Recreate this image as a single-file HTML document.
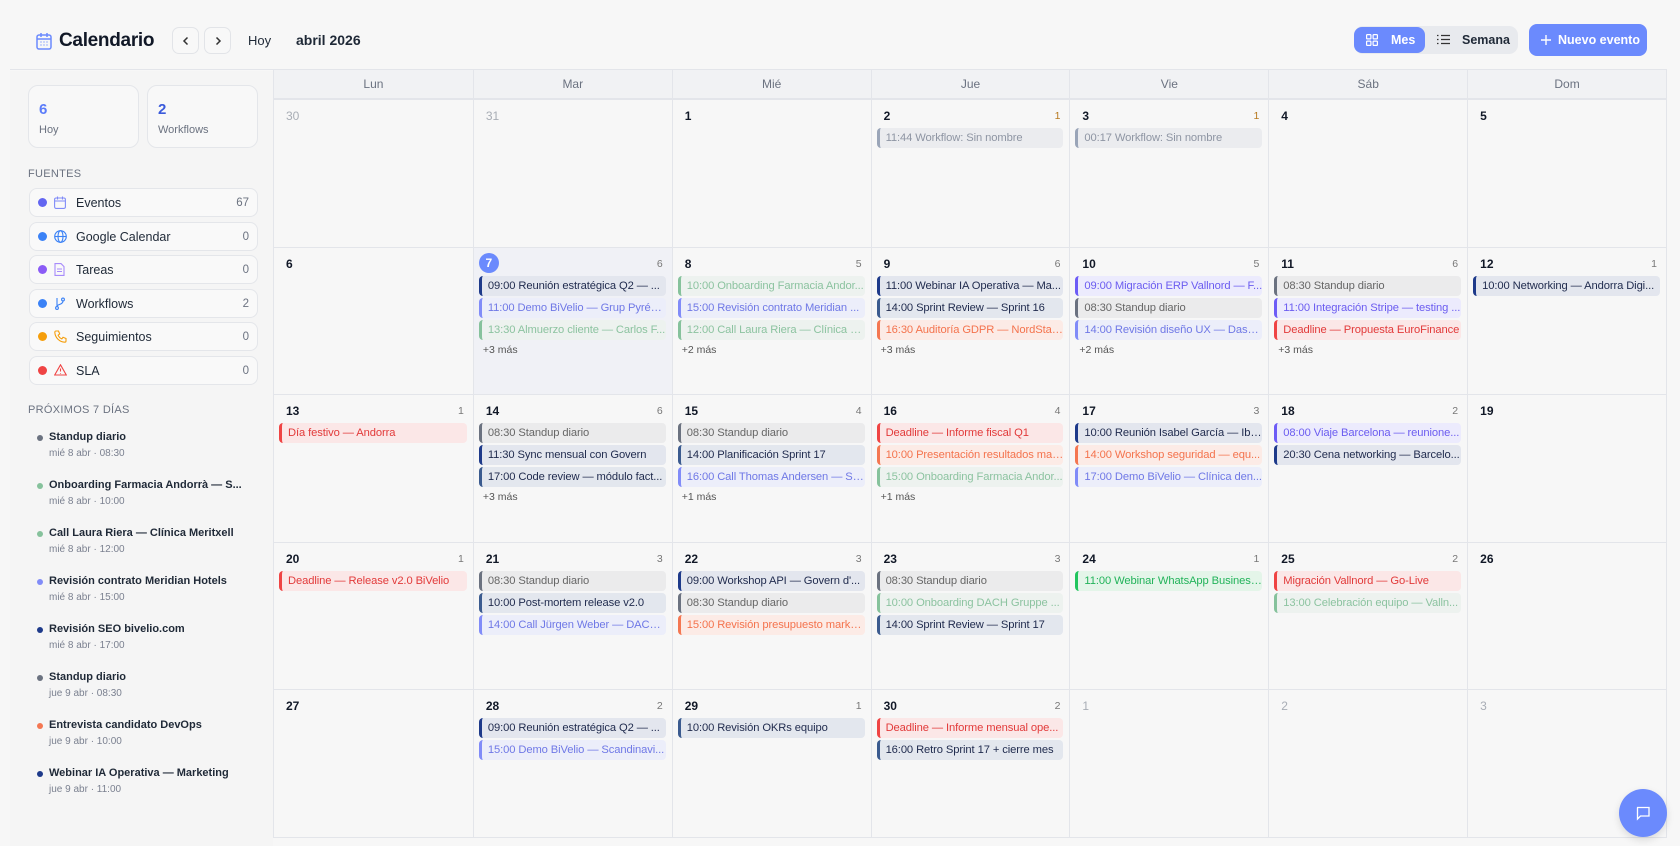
<!DOCTYPE html>
<html><head><meta charset="utf-8"><style>
*{box-sizing:border-box;margin:0;padding:0}
body{width:1680px;height:846px;background:#f7f7f7;font-family:"Liberation Sans","DejaVu Sans",sans-serif;position:relative;overflow:hidden;color:#1f2937}
.abs{position:absolute}
.hdr{left:10px;top:0;width:1657px;height:70px;border-bottom:1px solid #e3e5ea}
.title{left:59px;top:30px;font-size:19px;font-weight:bold;color:#111827;letter-spacing:-.3px}
.nb{width:27px;height:27px;border:1px solid #e2e4e8;border-radius:7px;background:#f8f8f8;top:27px;display:flex;align-items:center;justify-content:center}
.tog{left:1354px;top:26px;width:164px;height:28px;background:#e8eaee;border-radius:9px}
.mes{left:1354px;top:27px;width:71px;height:26px;background:#6b8afd;border-radius:8px;color:#fff;font-weight:bold;font-size:12.5px}
.btn{left:1529px;top:24px;width:118px;height:32px;background:#6b8afd;border-radius:8px;color:#fff;font-weight:bold;font-size:12.5px}
.side{left:10px;top:71px;width:263px;height:775px;background:#f5f5f5}
.card{top:85px;width:111px;height:63px;border:1px solid #e4e6ea;border-radius:10px;background:#f8f8f8}
.card b{position:absolute;left:10px;top:15px;font-size:15px;color:#5b7cfa}
.card span{position:absolute;left:10px;top:38px;font-size:11px;color:#6b7280}
.lbl{font-size:11px;color:#6b7280;letter-spacing:.3px}
.src{left:29px;width:229px;height:29px;border:1px solid #e4e6ea;border-radius:8px;background:#f9f9f9;font-size:12.5px;color:#1f2937}
.src .d{position:absolute;left:8px;top:9px;width:9px;height:9px;border-radius:50%}
.src .i{position:absolute;left:24px;top:7px}
.src .t{position:absolute;left:46px;top:7px}
.src .c{position:absolute;right:8px;top:8px;font-size:11.5px;color:#6b7280}
.up{width:220px;height:34px}
.up .d{position:absolute;left:0;top:4px;width:6px;height:6px;border-radius:50%}
.up .t{position:absolute;left:12px;top:0;font-size:11px;font-weight:bold;color:#1f2937;white-space:nowrap}
.up .s{position:absolute;left:12px;top:17px;font-size:10px;color:#7b8190;white-space:nowrap}
.grid{left:273px;top:70px;width:1394px;height:768px;border-left:1px solid #e3e5ea;border-right:1px solid #e3e5ea;border-bottom:1px solid #e3e5ea;display:grid;grid-template-columns:repeat(7,1fr);grid-template-rows:29px repeat(5,1fr)}
.ch{background:#f1f2f4;border-bottom:1px solid #e3e5ea;text-align:center;font-size:12px;color:#6b7280;line-height:29px}
.ch+.ch{border-left:1px solid #e3e5ea}
.cell{border-left:1px solid #e3e5ea;border-top:1px solid #e3e5ea;position:relative;padding:28px 6px 0 5px;overflow:hidden}
.cell.f{border-left:none}
.cell.td{background:#f0f1f6}
.n{position:absolute;left:12px;top:9px;font-size:12px;font-weight:bold;color:#111827}
.n.o{color:#a8adb5;font-weight:normal}
.n.today{left:5px;top:5px;width:20px;height:20px;border-radius:50%;background:#6b8afd;color:#fff;text-align:center;line-height:20px}
.k{position:absolute;right:9px;top:10px;font-size:10.5px;color:#777}
.e{height:20px;margin-bottom:2px;border-radius:4px;border-left:3px solid;font-size:11.2px;line-height:20px;padding-left:6px;white-space:nowrap;overflow:hidden;text-overflow:ellipsis;letter-spacing:-.1px}
.more{font-size:10.5px;color:#555;padding-left:4px;margin-top:4px}
.nv{border-color:#1e3a8a;background:#e3e6ee;color:#1f2a4d}
.lv{border-color:#818cf8;background:#eceefa;color:#6f78e6}
.gr{border-color:#86c29c;background:#edf2ef;color:#8cc3a0}
.gy{border-color:#6b7280;background:#ebebec;color:#666}
.rd{border-color:#ef4444;background:#fbe7e7;color:#e23a3a}
.or{border-color:#f47752;background:#fcebe6;color:#f4734d}
.pu{border-color:#6d5cf6;background:#ecebfd;color:#6b5cf0}
.sb{border-color:#3b5b8f;background:#e3e7ee;color:#1f2a4d}
.gb{border-color:#22c55e;background:#e4f5e9;color:#22b35a}
.wf{border-color:#9aa5b8;background:#ebecef;color:#8e95a3}
.chat{left:1619px;top:789px;width:48px;height:48px;border-radius:50%;background:#6b8afd;box-shadow:0 3px 8px rgba(0,0,0,.12)}
</style></head><body>
<div class="abs hdr"></div>
<svg class="abs" style="left:36px;top:32px" width="16" height="18" viewBox="0 0 16 18" fill="none" stroke="#6b8afd" stroke-width="1.5"><rect x="1" y="3" width="14" height="14" rx="2"/><path d="M1 7h14M5 1v4M11 1v4"/><path d="M4.5 10h1M7.5 10h1M10.5 10h1M4.5 13h1M7.5 13h1M10.5 13h1" stroke-width="1.3"/></svg>
<div class="abs title">Calendario</div>
<div class="abs nb" style="left:172px"><svg width="10" height="10" viewBox="0 0 10 10" fill="none" stroke="#333" stroke-width="1.5"><path d="M6.5 1.5L3 5l3.5 3.5"/></svg></div>
<div class="abs nb" style="left:204px"><svg width="10" height="10" viewBox="0 0 10 10" fill="none" stroke="#333" stroke-width="1.5"><path d="M3.5 1.5L7 5 3.5 8.5"/></svg></div>
<div class="abs" style="left:248px;top:33px;font-size:13px;color:#1f2937">Hoy</div>
<div class="abs" style="left:296px;top:32px;font-size:14px;font-weight:bold;color:#1f2937">abril 2026</div>
<div class="abs tog"></div>
<div class="abs mes"><svg style="position:absolute;left:12px;top:7px" width="12" height="12" viewBox="0 0 12 12" fill="none" stroke="#fff" stroke-width="1.2"><rect x=".6" y=".6" width="4.3" height="4.3" rx=".8"/><rect x="7.1" y=".6" width="4.3" height="4.3" rx=".8"/><rect x=".6" y="7.1" width="4.3" height="4.3" rx=".8"/><rect x="7.1" y="7.1" width="4.3" height="4.3" rx=".8"/></svg><span style="position:absolute;left:37px;top:6px">Mes</span></div>
<svg class="abs" style="left:1437px;top:34px" width="13" height="11" viewBox="0 0 13 11" fill="none" stroke="#333" stroke-width="1.3"><path d="M4 1.5h9M4 5.5h9M4 9.5h9M0 1.5h1.5M0 5.5h1.5M0 9.5h1.5"/></svg>
<div class="abs" style="left:1462px;top:33px;font-size:12.5px;font-weight:bold;color:#1f2937">Semana</div>
<div class="abs btn"><svg style="position:absolute;left:11px;top:10px" width="12" height="12" viewBox="0 0 12 12" stroke="#fff" stroke-width="1.4"><path d="M6 1v10M1 6h10"/></svg><span style="position:absolute;left:29px;top:9px">Nuevo evento</span></div>

<div class="abs side"></div>
<div class="abs card" style="left:28px"><b>6</b><span>Hoy</span></div>
<div class="abs card" style="left:147px"><b style="color:#3b5bdb">2</b><span>Workflows</span></div>
<div class="abs lbl" style="left:28px;top:168px">FUENTES</div>

<div class="abs src" style="top:188px"><div class="d" style="background:#6366f1"></div><svg class="i" width="12" height="13" viewBox="0 0 12 13" fill="none" stroke="#818cf8" stroke-width="1.1"><rect x=".6" y="2" width="10.8" height="10.4" rx="1.5"/><path d="M.6 5h10.8M3.5 .5v3M8.5 .5v3"/></svg><span class="t">Eventos</span><span class="c">67</span></div>
<div class="abs src" style="top:222px"><div class="d" style="background:#3b82f6"></div><svg class="i" width="13" height="13" viewBox="0 0 13 13" fill="none" stroke="#3b82f6" stroke-width="1.1"><circle cx="6.5" cy="6.5" r="5.8"/><ellipse cx="6.5" cy="6.5" rx="2.5" ry="5.8"/><path d="M.7 6.5h11.6"/></svg><span class="t">Google Calendar</span><span class="c">0</span></div>
<div class="abs src" style="top:255px"><div class="d" style="background:#8b5cf6"></div><svg class="i" width="11" height="13" viewBox="0 0 11 13" fill="none" stroke="#a78bfa" stroke-width="1.1"><path d="M1 .6h6l3 3v8.8H1z M3 6h5M3 8.5h5"/></svg><span class="t">Tareas</span><span class="c">0</span></div>
<div class="abs src" style="top:289px"><div class="d" style="background:#3b82f6"></div><svg class="i" width="12" height="13" viewBox="0 0 12 13" fill="none" stroke="#3b82f6" stroke-width="1.1"><circle cx="3" cy="11" r="1.4"/><circle cx="9" cy="2.5" r="1.4"/><path d="M3 1v8.5M9 4c0 4-6 3-6 5.5"/></svg><span class="t">Workflows</span><span class="c">2</span></div>
<div class="abs src" style="top:322px"><div class="d" style="background:#f59e0b"></div><svg class="i" width="13" height="13" viewBox="0 0 13 13" fill="none" stroke="#f59e0b" stroke-width="1.1"><path d="M2 1h2.5l1.2 3-1.6 1.2a7 7 0 003.7 3.7L9 7.3l3 1.2V11a1.2 1.2 0 01-1.2 1.2A10.5 10.5 0 01.8 2.2 1.2 1.2 0 012 1z"/></svg><span class="t">Seguimientos</span><span class="c">0</span></div>
<div class="abs src" style="top:356px"><div class="d" style="background:#ef4444"></div><svg class="i" width="13" height="12" viewBox="0 0 13 12" fill="none" stroke="#ef4444" stroke-width="1.1"><path d="M6.5 .8L12.3 11H.7z M6.5 4.5v3M6.5 9v.6"/></svg><span class="t">SLA</span><span class="c">0</span></div>

<div class="abs lbl" style="left:28px;top:404px">PRÓXIMOS 7 DÍAS</div>
<div class="abs up" style="left:37px;top:431px"><div class="d" style="background:#6b7280"></div><div class="t">Standup diario</div><div class="s">mié 8 abr · 08:30</div></div>
<div class="abs up" style="left:37px;top:479px"><div class="d" style="background:#86c29c"></div><div class="t">Onboarding Farmacia Andorrà — S...</div><div class="s">mié 8 abr · 10:00</div></div>
<div class="abs up" style="left:37px;top:527px"><div class="d" style="background:#86c29c"></div><div class="t">Call Laura Riera — Clínica Meritxell</div><div class="s">mié 8 abr · 12:00</div></div>
<div class="abs up" style="left:37px;top:575px"><div class="d" style="background:#818cf8"></div><div class="t">Revisión contrato Meridian Hotels</div><div class="s">mié 8 abr · 15:00</div></div>
<div class="abs up" style="left:37px;top:623px"><div class="d" style="background:#1e3a8a"></div><div class="t">Revisión SEO bivelio.com</div><div class="s">mié 8 abr · 17:00</div></div>
<div class="abs up" style="left:37px;top:671px"><div class="d" style="background:#6b7280"></div><div class="t">Standup diario</div><div class="s">jue 9 abr · 08:30</div></div>
<div class="abs up" style="left:37px;top:719px"><div class="d" style="background:#f47752"></div><div class="t">Entrevista candidato DevOps</div><div class="s">jue 9 abr · 10:00</div></div>
<div class="abs up" style="left:37px;top:767px"><div class="d" style="background:#1e3a8a"></div><div class="t">Webinar IA Operativa — Marketing</div><div class="s">jue 9 abr · 11:00</div></div>

<div class="abs grid">
<div class="ch">Lun</div><div class="ch">Mar</div><div class="ch">Mié</div><div class="ch">Jue</div><div class="ch">Vie</div><div class="ch">Sáb</div><div class="ch">Dom</div>

<div class="cell f"><span class="n o">30</span></div>
<div class="cell"><span class="n o">31</span></div>
<div class="cell"><span class="n">1</span></div>
<div class="cell"><span class="n">2</span><span class="k" style="color:#b7791f">1</span><div class="e wf">11:44 Workflow: Sin nombre</div></div>
<div class="cell"><span class="n">3</span><span class="k" style="color:#b7791f">1</span><div class="e wf">00:17 Workflow: Sin nombre</div></div>
<div class="cell"><span class="n">4</span></div>
<div class="cell"><span class="n">5</span></div>

<div class="cell f"><span class="n">6</span></div>
<div class="cell td"><span class="n today">7</span><span class="k">6</span><div class="e nv">09:00 Reunión estratégica Q2 — ...</div><div class="e lv">11:00 Demo BiVelio — Grup Pyrén...</div><div class="e gr">13:30 Almuerzo cliente — Carlos F...</div><div class="more">+3 más</div></div>
<div class="cell"><span class="n">8</span><span class="k">5</span><div class="e gr">10:00 Onboarding Farmacia Andor...</div><div class="e lv">15:00 Revisión contrato Meridian ...</div><div class="e gr">12:00 Call Laura Riera — Clínica M...</div><div class="more">+2 más</div></div>
<div class="cell"><span class="n">9</span><span class="k">6</span><div class="e nv">11:00 Webinar IA Operativa — Ma...</div><div class="e sb">14:00 Sprint Review — Sprint 16</div><div class="e or">16:30 Auditoría GDPR — NordStar...</div><div class="more">+3 más</div></div>
<div class="cell"><span class="n">10</span><span class="k">5</span><div class="e pu">09:00 Migración ERP Vallnord — F...</div><div class="e gy">08:30 Standup diario</div><div class="e lv">14:00 Revisión diseño UX — Dash...</div><div class="more">+2 más</div></div>
<div class="cell"><span class="n">11</span><span class="k">6</span><div class="e gy">08:30 Standup diario</div><div class="e pu">11:00 Integración Stripe — testing ...</div><div class="e rd">Deadline — Propuesta EuroFinance</div><div class="more">+3 más</div></div>
<div class="cell"><span class="n">12</span><span class="k">1</span><div class="e nv">10:00 Networking — Andorra Digi...</div></div>

<div class="cell f"><span class="n">13</span><span class="k">1</span><div class="e rd">Día festivo — Andorra</div></div>
<div class="cell"><span class="n">14</span><span class="k">6</span><div class="e gy">08:30 Standup diario</div><div class="e nv">11:30 Sync mensual con Govern</div><div class="e sb">17:00 Code review — módulo fact...</div><div class="more">+3 más</div></div>
<div class="cell"><span class="n">15</span><span class="k">4</span><div class="e gy">08:30 Standup diario</div><div class="e sb">14:00 Planificación Sprint 17</div><div class="e lv">16:00 Call Thomas Andersen — Sc...</div><div class="more">+1 más</div></div>
<div class="cell"><span class="n">16</span><span class="k">4</span><div class="e rd">Deadline — Informe fiscal Q1</div><div class="e or">10:00 Presentación resultados mar...</div><div class="e gr">15:00 Onboarding Farmacia Andor...</div><div class="more">+1 más</div></div>
<div class="cell"><span class="n">17</span><span class="k">3</span><div class="e nv">10:00 Reunión Isabel García — Ibe...</div><div class="e or">14:00 Workshop seguridad — equ...</div><div class="e lv">17:00 Demo BiVelio — Clínica den...</div></div>
<div class="cell"><span class="n">18</span><span class="k">2</span><div class="e pu">08:00 Viaje Barcelona — reunione...</div><div class="e nv">20:30 Cena networking — Barcelo...</div></div>
<div class="cell"><span class="n">19</span></div>

<div class="cell f"><span class="n">20</span><span class="k">1</span><div class="e rd">Deadline — Release v2.0 BiVelio</div></div>
<div class="cell"><span class="n">21</span><span class="k">3</span><div class="e gy">08:30 Standup diario</div><div class="e sb">10:00 Post-mortem release v2.0</div><div class="e lv">14:00 Call Jürgen Weber — DACH ...</div></div>
<div class="cell"><span class="n">22</span><span class="k">3</span><div class="e nv">09:00 Workshop API — Govern d'...</div><div class="e gy">08:30 Standup diario</div><div class="e or">15:00 Revisión presupuesto marke...</div></div>
<div class="cell"><span class="n">23</span><span class="k">3</span><div class="e gy">08:30 Standup diario</div><div class="e gr">10:00 Onboarding DACH Gruppe ...</div><div class="e sb">14:00 Sprint Review — Sprint 17</div></div>
<div class="cell"><span class="n">24</span><span class="k">1</span><div class="e gb">11:00 Webinar WhatsApp Business...</div></div>
<div class="cell"><span class="n">25</span><span class="k">2</span><div class="e rd">Migración Vallnord — Go-Live</div><div class="e gr">13:00 Celebración equipo — Valln...</div></div>
<div class="cell"><span class="n">26</span></div>

<div class="cell f"><span class="n">27</span></div>
<div class="cell"><span class="n">28</span><span class="k">2</span><div class="e nv">09:00 Reunión estratégica Q2 — ...</div><div class="e lv">15:00 Demo BiVelio — Scandinavi...</div></div>
<div class="cell"><span class="n">29</span><span class="k">1</span><div class="e sb">10:00 Revisión OKRs equipo</div></div>
<div class="cell"><span class="n">30</span><span class="k">2</span><div class="e rd">Deadline — Informe mensual ope...</div><div class="e sb">16:00 Retro Sprint 17 + cierre mes</div></div>
<div class="cell"><span class="n o">1</span></div>
<div class="cell"><span class="n o">2</span></div>
<div class="cell"><span class="n o">3</span></div>
</div>

<div class="abs chat"><svg style="position:absolute;left:16px;top:16px" width="16" height="16" viewBox="0 0 16 16" fill="none" stroke="#fff" stroke-width="1.3"><path d="M2 2.5h12v8.5H5.5L2.5 14V2.5z"/></svg></div>
</body></html>
